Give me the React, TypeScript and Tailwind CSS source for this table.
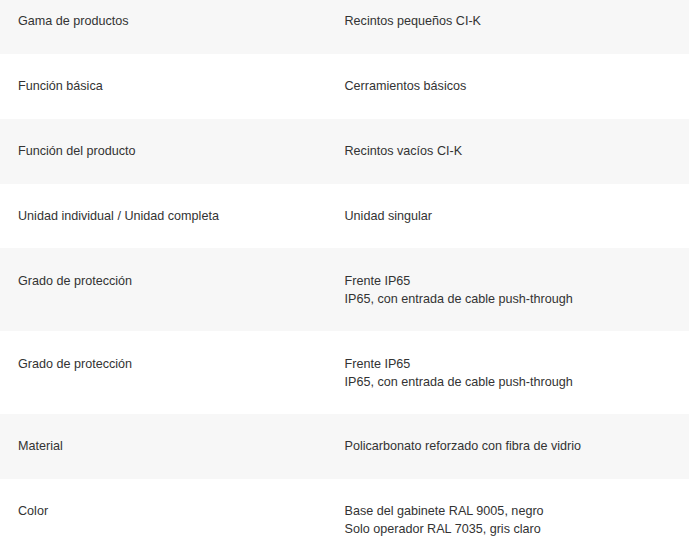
import React from 'react';

const rows: { label: string; value: string[] }[] = [
  { label: 'Gama de productos', value: ['Recintos pequeños CI-K'] },
  { label: 'Función básica', value: ['Cerramientos básicos'] },
  { label: 'Función del producto', value: ['Recintos vacíos CI-K'] },
  { label: 'Unidad individual / Unidad completa', value: ['Unidad singular'] },
  { label: 'Grado de protección', value: ['Frente IP65', 'IP65, con entrada de cable push-through'] },
  { label: 'Grado de protección', value: ['Frente IP65', 'IP65, con entrada de cable push-through'] },
  { label: 'Material', value: ['Policarbonato reforzado con fibra de vidrio'] },
  { label: 'Color', value: ['Base del gabinete RAL 9005, negro', 'Solo operador RAL 7035, gris claro'] },
];

export default function App() {
  return (
    <div className="w-[689px] h-[553px] overflow-hidden bg-white text-[12.6px] leading-[18px] text-[#333333] font-['Liberation_Sans',Arial,sans-serif]">
      {rows.map((row, i) => (
        <div
          key={i}
          className={`grid grid-cols-2 ${i % 2 === 0 ? 'bg-[#f7f7f7]' : 'bg-white'} ${
            i === 0 ? 'pt-[12px] pb-[24px]' : 'py-[23.4px]'
          }`}
        >
          <div className="pl-[18px]">{row.label}</div>
          <div>
            {row.value.map((v, j) => (
              <div key={j}>{v}</div>
            ))}
          </div>
        </div>
      ))}
    </div>
  );
}
